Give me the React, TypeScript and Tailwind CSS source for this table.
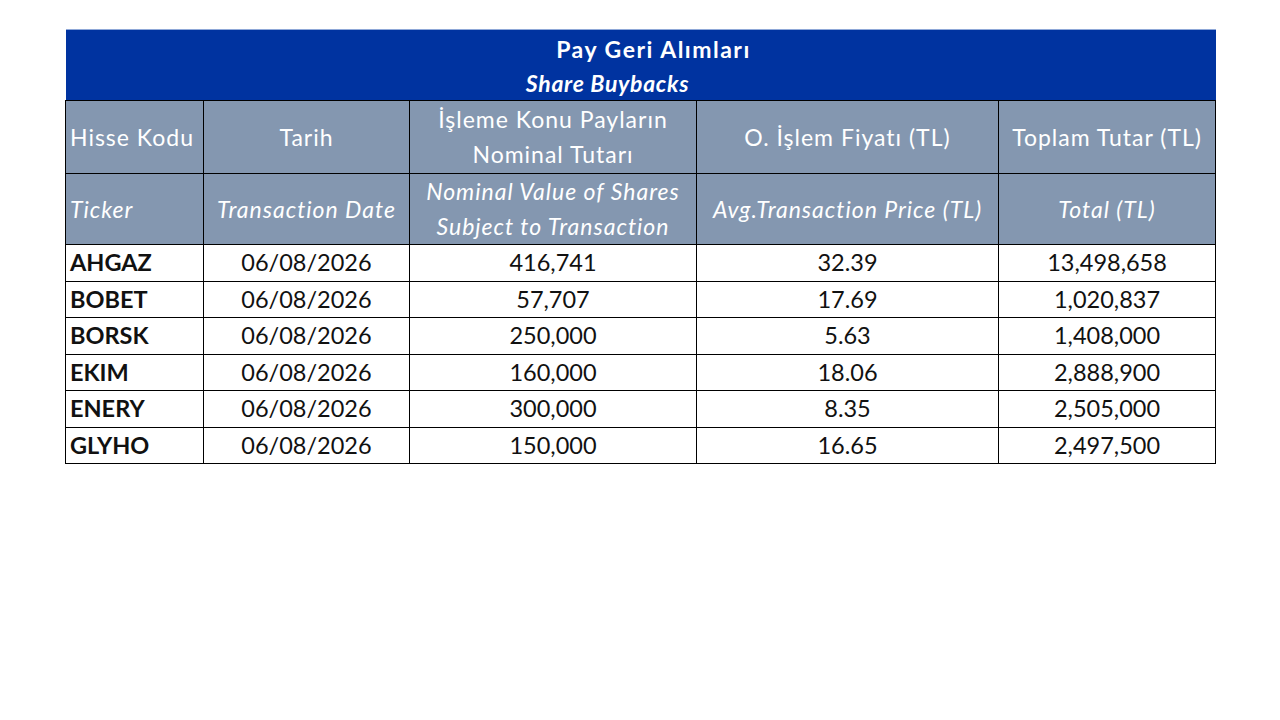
const rows = [
  ['AHGAZ', '06/08/2026', '416,741', '32.39', '13,498,658'],
  ['BOBET', '06/08/2026', '57,707', '17.69', '1,020,837'],
  ['BORSK', '06/08/2026', '250,000', '5.63', '1,408,000'],
  ['EKIM', '06/08/2026', '160,000', '18.06', '2,888,900'],
  ['ENERY', '06/08/2026', '300,000', '8.35', '2,505,000'],
  ['GLYHO', '06/08/2026', '150,000', '16.65', '2,497,500'],
];

const head =
  'border border-black bg-[#8497b0] text-white font-normal text-center px-1 text-[23px] tracking-[1px] leading-[35px]';

export default function App() {
  return (
    <div className="w-[1280px] h-[720px] bg-white pt-[29px] pl-[65px]" style={{ fontFamily: 'Lato, "Open Sans", sans-serif' }}>
      <table className="w-[1150px] border-collapse table-fixed">
        <colgroup>
          <col className="w-[138px]" />
          <col className="w-[206px]" />
          <col className="w-[287px]" />
          <col className="w-[302px]" />
          <col className="w-[217px]" />
        </colgroup>
        <thead>
          <tr>
            <th colSpan={5} className="bg-[#0033a0] text-white h-[70px] border-t border-[#8fa8d8] p-0 text-[23px] font-bold">
              <div className="leading-[34px] pt-[2px] pl-[26px] tracking-[1.5px]">Pay Geri Alımları</div>
              <div className="italic leading-[34px] pr-[66px] tracking-[0.7px]">Share Buybacks</div>
            </th>
          </tr>
          <tr className="h-[73px]">
            <th className={head + ' text-left'}>Hisse Kodu</th>
            <th className={head}>Tarih</th>
            <th className={head}>İşleme Konu Payların<br />Nominal Tutarı</th>
            <th className={head}>O. İşlem Fiyatı (TL)</th>
            <th className={head}>Toplam Tutar (TL)</th>
          </tr>
          <tr className="h-[70px]">
            <th className={head + ' italic text-left'}>Ticker</th>
            <th className={head + ' italic'}>Transaction Date</th>
            <th className={head + ' italic'}>Nominal Value of Shares<br />Subject to Transaction</th>
            <th className={head + ' italic'}>Avg.Transaction Price (TL)</th>
            <th className={head + ' italic'}>Total (TL)</th>
          </tr>
        </thead>
        <tbody className="text-[23.5px]">
          {rows.map((r) => (
            <tr key={r[0]} className="h-[36.5px] text-[#111]">
              <td className="border border-black px-1 font-bold leading-none">{r[0]}</td>
              {r.slice(1).map((c, i) => (
                <td key={i} className="border border-black text-center leading-none">{c}</td>
              ))}
            </tr>
          ))}
        </tbody>
      </table>
    </div>
  );
}
